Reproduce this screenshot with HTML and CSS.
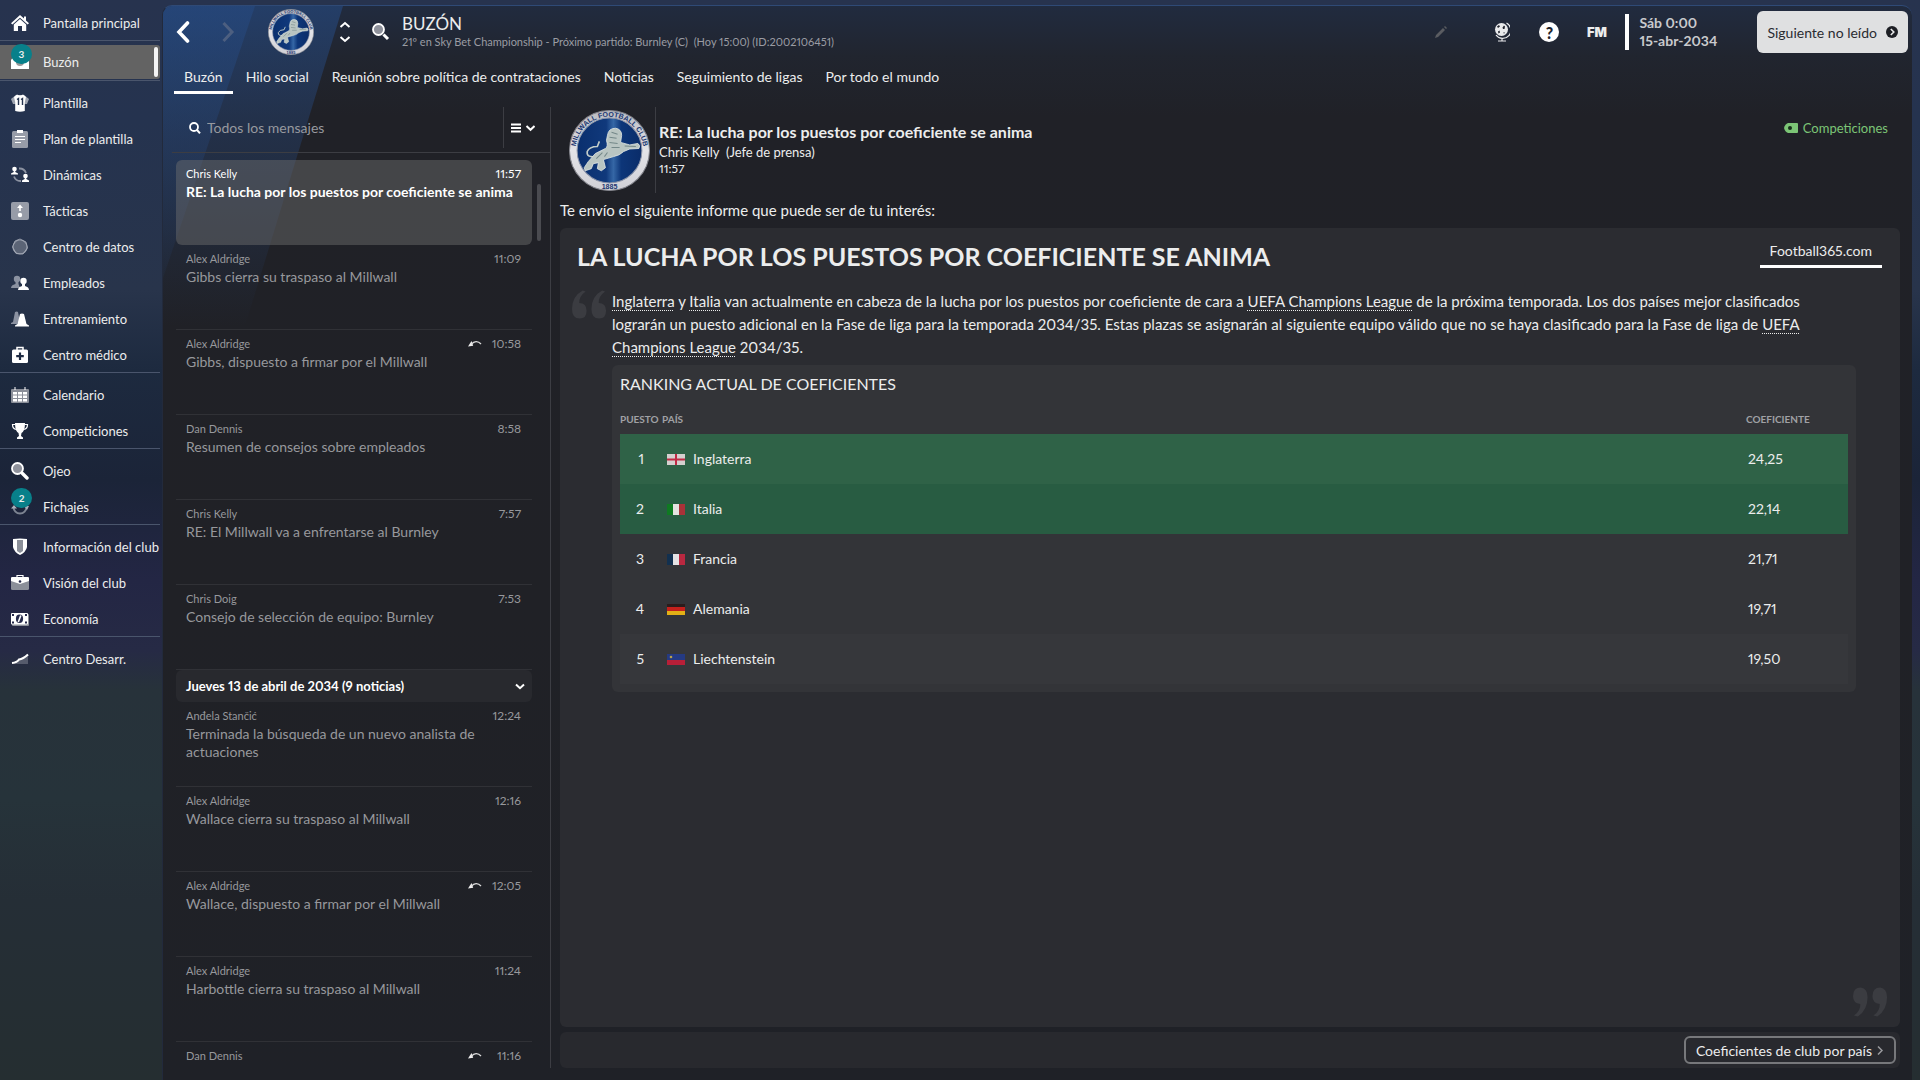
FILE: index.html
```html
<!DOCTYPE html>
<html lang="es">
<head>
	<meta charset="utf-8">
	<title>Buzón</title>
	<link rel="stylesheet" href="styles.css">
</head>
<body>
	<svg class="defs" aria-hidden="true">
		<defs>
			<linearGradient id="ring" x1="0" y1="0" x2="0" y2="1">
				<stop offset="0" stop-color="#b9bac0"/>
				<stop offset=".5" stop-color="#e4e4e8"/>
				<stop offset="1" stop-color="#d0d0d6"/>
			</linearGradient>
			<linearGradient id="blue" x1="0" y1="0" x2="1" y2="0">
				<stop offset="0" stop-color="#0a2f6e"/>
				<stop offset=".45" stop-color="#10397c"/>
				<stop offset=".56" stop-color="#3567a6"/>
				<stop offset=".68" stop-color="#0d3679"/>
				<stop offset="1" stop-color="#0a2c69"/>
			</linearGradient>
			<path id="arc" d="M7.2 47 A 33.5 33.5 0 1 1 72.8 47"/>
			<symbol id="crest" viewBox="0 0 80 80">
				<circle cx="40" cy="40" r="39.5" fill="url(#ring)" stroke="#85868e" stroke-width="1"/>
				<circle cx="40" cy="40" r="32" fill="url(#blue)" stroke="#8a93a8" stroke-width="1"/>
				<text class="crest-text"><textPath href="#arc" startOffset="50%" text-anchor="middle">MILLWALL FOOTBALL CLUB</textPath></text>
				<text class="crest-text" x="40" y="78" text-anchor="middle">1885</text>
				<path d="M26 46 Q17 47 18 41 Q20 36 28 36 L30 31" fill="none" stroke="#c3cdc9" stroke-width="1.6"/>
				<path d="M38 25 Q39 18 46 18 Q52 19 52 25 L51 32 L60 34.5 L68 33 Q71 35 69 38 L60 38.500 L54 41 Q50 45 44 46 L34 49 L36 57 L32 60 L28 58 L29 52 L24 53 L22 58 L16 60 L15 57 L19 51 L26 43 L36 38 Q39 36 37 30z" fill="#b9c5c2" stroke="#e3e8e4" stroke-width=".8"/>
				<path d="M42 22 L48 24 M40 27 L47 28 M40 32 L48 33 M42 37 L50 37 M33 42 L27 48 M38 42 L35 46 M55 35.500 L66 36" stroke="#748889" stroke-width="1" fill="none"/>
			</symbol>
			<symbol id="reply" viewBox="0 0 14 8">
				<path d="M0 6.5 L3.5 1 L5.2 5.8 Z" fill="#eee"/>
				<path d="M3.5 4.2 C6 1 10 .6 13 4" fill="none" stroke="#ddd" stroke-width="1.3"/>
			</symbol>
		</defs>
	</svg>

	<nav class="sidebar">
		<ul>
			<li class="last"><a href="#"><svg viewBox="0 0 18 18"><path d="M9 1 L0 9.2 L1.4 10.4 L9 3.8 L16.6 10.4 L18 9.2 L15 6.5 V2.5 H13 V4.6z" fill="#fff"/><path d="M9 5 L2.8 10.4 V17 H7 V12 H11 V17 H15.2 V10.4z" fill="#fff"/></svg>Pantalla principal</a></li>
			<li class="last"><a class="current" href="#"><svg viewBox="0 0 18 18"><path d="M0 7 L3 3 H15 L18 7 V16 H0z" fill="#fff"/><circle cx="9" cy="9" r="4" fill="#999"/></svg>Buzón<span class="badge">3</span></a></li>
			<li><a href="#"><svg viewBox="0 0 18 18"><path d="M5 1 L0 5 L2 10 L16 10 L18 5 L13 1z" fill="#9fa5b1"/><path d="M6 .5 Q9 2.5 12 .5 L15 3 L13.8 8 V17 Q9 18.5 4.2 17 V8 L3 3z" fill="#fff"/><path d="M6 5.500 L7.500 4.500 V11 M10 5.500 L11.500 4.500 V11" fill="none" stroke="#26344f" stroke-width="1.4"/></svg>Plantilla</a></li>
			<li><a href="#"><svg viewBox="0 0 18 18"><rect x="1" y="1" width="16" height="17" rx="1.5" fill="#979ca8"/><rect x="6" y="0" width="6" height="3" fill="#fff"/><path d="M4 6.5 H14 M4 9.5 H14 M4 12.5 H10" stroke="#fff" stroke-width="1.2"/></svg>Plan de plantilla</a></li>
			<li><a href="#"><svg viewBox="0 0 18 18"><path d="M8 2.5 A7 7 0 0 1 15 7 M10 15 A7 7 0 0 1 3 10.5" fill="none" stroke="#8b92a1" stroke-width="1.8"/><circle cx="3.5" cy="3" r="2.3" fill="#fff"/><path d="M2.7 4 H4.300 V6 L7 7.5 V8.5 H0 V7.5 L2.7 6z" fill="#fff"/><circle cx="14.5" cy="10" r="2.3" fill="#fff"/><path d="M13.7 11 H15.3 V13 L18 14.5 V16 H11 V14.5 L13.7 13z" fill="#fff"/></svg>Dinámicas</a></li>
			<li><a href="#"><svg viewBox="0 0 18 18"><rect x="0" y="0" width="18" height="18" rx="2" fill="#979ca8"/><path d="M9 9 V4" stroke="#fff" stroke-width="1.6"/><path d="M6 6 L9 2.5 L12 6z" fill="#fff"/><circle cx="9" cy="13" r="2.2" fill="#fff"/></svg>Tácticas</a></li>
			<li><a href="#"><svg viewBox="0 0 18 18"><circle cx="9" cy="9" r="7" fill="#5b6476" stroke="#8c93a2" stroke-width="1.2"/><path d="M9 1 L15 4 L16.5 10 L12 16 L5 15.5 L1.5 9 L4 3z" fill="none" stroke="#a9afba" stroke-width=".8"/></svg>Centro de datos</a></li>
			<li><a href="#"><svg viewBox="0 0 18 18"><circle cx="6" cy="5" r="3.2" fill="#8b92a1"/><path d="M0 14 Q0 11 4.5 10 V7 H7.5 V10 L9 14z" fill="#8b92a1"/><circle cx="12.5" cy="7" r="3.2" fill="#fff"/><path d="M7 16 Q7 13 11 12 V9 H14 V12 Q18 13 18 16z" fill="#fff"/></svg>Empleados</a></li>
			<li><a href="#"><svg viewBox="0 0 18 18"><path d="M4 2 Q6 1 7 2 L9 12 L6 14 H0 V13 L2 12z" fill="#8b92a1"/><path d="M9 4 Q11 3 13 4 L15.5 14 L18 15.5 V16.5 H4 V15.5 L6.5 14z" fill="#fff"/></svg>Entrenamiento</a></li>
			<li class="last"><a href="#"><svg viewBox="0 0 18 18"><path d="M6 4 V1.5 H12 V4" fill="none" stroke="#fff" stroke-width="1.5"/><rect x="1" y="3.5" width="16" height="13.5" rx="1.5" fill="#fff"/><path d="M9 6.5 V14 M5.2 10.2 H12.8" stroke="#1e2b43" stroke-width="2.2"/></svg>Centro médico</a></li>
			<li><a href="#"><svg viewBox="0 0 18 18"><rect x="0" y="3" width="18" height="14" rx="1" fill="#8b8f99"/><path d="M4 1 V4 M14 1 V4" stroke="#fff" stroke-width="1"/><path d="M2 6h4v2.600h-4z M7 6h4v2.600h-4z M12 6h4v2.600h-4z M2 9.500h4v2.600h-4z M7 9.500h4v2.600h-4z M12 9.500h4v2.600h-4z M7 13h4v2.600h-4z M2 13h4v2.600h-4z M12 13h4v2.600h-4z" fill="#fff"/></svg>Calendario</a></li>
			<li class="last"><a href="#"><svg viewBox="0 0 18 18"><path d="M4 1 H14 Q14 9 10.5 11 L10 14 L12 15.5 V17 H6 V15.5 L8 14 L7.5 11 Q4 9 4 1z" fill="#fff"/><path d="M4.5 2.5 H1.5 Q1.5 7 5.5 7.5 M13.5 2.5 H16.5 Q16.5 7 12.5 7.5" fill="none" stroke="#fff" stroke-width="1.2"/></svg>Competiciones</a></li>
			<li><a href="#"><svg viewBox="0 0 18 18"><circle cx="6.5" cy="6.5" r="5.5" fill="#8f929c" stroke="#fff" stroke-width="1.8"/><path d="M11.5 11.5 L16 16" stroke="#fff" stroke-width="3.4" stroke-linecap="round"/></svg>Ojeo</a></li>
			<li class="last"><a href="#"><svg viewBox="0 0 18 18"><path d="M2.5 9 A6.5 6.5 0 0 0 15.5 9" fill="none" stroke="#7d8492" stroke-width="2"/><path d="M0 10.5 L3 7 L6 10.5z M13 8 h5 l-2 4z" fill="#a9afba"/></svg>Fichajes<span class="badge">2</span></a></li>
			<li><a href="#"><svg viewBox="0 0 18 18"><path d="M2 1 Q9 0 16 1 V9 Q15 14 9 17 Q3 14 2 9z" fill="#fff"/><path d="M6 2 H12 V13 L9 15 L6 13z" fill="#8b8f99"/></svg>Información del club</a></li>
			<li><a href="#"><svg viewBox="0 0 18 18"><rect x="0" y="3" width="18" height="13" rx="1.5" fill="#8b8f99"/><path d="M6 3.5 V1.5 H12 V3.5" fill="none" stroke="#fff" stroke-width="1.2"/><path d="M0 4 Q0 3 1.5 3 H16.5 Q18 3 18 4 V7 L9 10 L0 7z" fill="#fff"/><circle cx="9" cy="7.5" r="1.3" fill="#24284a"/></svg>Visión del club</a></li>
			<li class="last"><a href="#"><svg viewBox="0 0 18 18"><rect x="1" y="4" width="17" height="12" rx="1" fill="#8b8f99"/><rect x="0" y="3" width="17" height="11.5" rx="1" fill="#fff"/><ellipse cx="8.5" cy="8.7" rx="3.6" ry="4.2" fill="#24284a"/><path d="M9.8 5.5 L7.3 12" stroke="#fff" stroke-width="1.6"/><path d="M1 4h2v2h-2z M14 4h2v2h-2z M1 11.5h2v2h-2z M14 11.5h2v2h-2z" fill="#24284a"/></svg>Economía</a></li>
			<li><a href="#"><svg viewBox="0 0 18 18"><path d="M1 13 L6 11 L10 9 L17 4 V14 H1z" fill="#565b6c"/><path d="M1 13 Q6 12.5 8 9.500 Q12 9 17 4.500" fill="none" stroke="#fff" stroke-width="2.200"/></svg>Centro Desarr.</a></li>
		</ul>
	</nav>

	<main class="panel">
		<header class="topbar">
			<button class="icon-btn" aria-label="Atrás"><svg width="14" height="22" viewBox="0 0 14 22"><path d="M11.5 2 L3 11 L11.5 20" fill="none" stroke="#fff" stroke-width="3.6" stroke-linecap="round"/></svg></button>
			<button class="icon-btn forward" aria-label="Adelante"><svg width="14" height="22" viewBox="0 0 14 22"><path d="M2.5 2 L11 11 L2.5 20" fill="none" stroke="#4d5f80" stroke-width="3"/></svg></button>
			<svg class="crest-small"><use href="#crest"/></svg>
			<button class="icon-btn" aria-label="Cambiar de club"><svg width="12" height="22" viewBox="0 0 12 22"><path d="M1.5 6 L6 2 L10.5 6 M1.5 16 L6 20 L10.5 16" fill="none" stroke="#fff" stroke-width="2"/></svg></button>
			<button class="icon-btn find" aria-label="Buscar"><svg width="18" height="18" viewBox="0 0 18 18"><circle cx="6.5" cy="6.5" r="5.5" fill="#8f929c" stroke="#fff" stroke-width="1.8"/><path d="M11.5 11.5 L16 16" stroke="#fff" stroke-width="3"/></svg></button>
			<div class="heading">
				<h1>BUZÓN</h1>
				<p>21º en Sky Bet Championship - Próximo partido: Burnley (C)&nbsp; (Hoy 15:00) (ID:2002106451)</p>
			</div>
			<div class="tools">
				<button class="icon-btn" aria-label="Editar"><svg width="12" height="12" viewBox="0 0 12 12"><path d="M0 12 L1 9 L8 2 L10 4 L3 11z M9 1 L10 0 L12 2 L11 3z" fill="#5a5c61"/></svg></button>
				<button class="icon-btn" aria-label="Mundo"><svg width="16" height="20" viewBox="0 0 16 20"><circle cx="7.5" cy="7.500" r="6.500" fill="#e9eaec"/><path d="M3 4.500 l2-1.500 1 1.500-2 1.500z M8.500 5.500 l1.500-2 1 1-.5 2.500-1.500 0z M4 9.500 l1.500-1 .5 2-1.500 1z M9 11 l1.500-1 0 1.500z" fill="#20232c"/><path d="M12.500 1 A8.200 8.200 0 1 1 2 13 M8 16 V19 M4 19 H12" fill="none" stroke="#e9eaec" stroke-width="1.200"/></svg></button>
				<button class="icon-btn help" aria-label="Ayuda">?</button>
				<button class="icon-btn fm">FM</button>
				<div class="date"><span>Sáb 0:00</span><span>15-abr-2034</span></div>
				<button class="next">Siguiente no leído <svg width="12" height="12" viewBox="0 0 12 12"><circle cx="6" cy="6" r="6" fill="#1d1f24"/><path d="M4.8 3 L7.8 6 L4.8 9" fill="none" stroke="#e6e7e8" stroke-width="1.6"/></svg></button>
			</div>
		</header>

		<nav class="tabs">
			<a class="active" href="#">Buzón</a>
			<a href="#">Hilo social</a>
			<a href="#">Reunión sobre política de contrataciones</a>
			<a href="#">Noticias</a>
			<a href="#">Seguimiento de ligas</a>
			<a href="#">Por todo el mundo</a>
		</nav>

		<div class="columns">
			<section class="inbox">
				<div class="search">
					<label for="q" aria-label="Buscar mensajes"><svg width="12" height="12" viewBox="0 0 12 12"><circle cx="5" cy="5" r="4" fill="none" stroke="#fff" stroke-width="1.8"/><path d="M8 8 L11 11.3" stroke="#fff" stroke-width="2"/></svg></label>
					<input id="q" type="text" placeholder="Todos los mensajes">
					<button class="menu-btn" aria-label="Filtrar"><svg width="24" height="10" viewBox="0 0 24 10"><path d="M0 1.5 H10 M0 5 H10 M0 8.5 H10" stroke="#fff" stroke-width="1.8"/><path d="M15.5 3 L19.5 6.8 L23.5 3" fill="none" stroke="#fff" stroke-width="2"/></svg></button>
				</div>
				<div class="scroll">
					<ul class="messages">
						<li class="selected"><a href="#"><span class="from">Chris Kelly</span><time>11:57</time><span class="subject">RE: La lucha por los puestos por coeficiente se anima</span></a></li>
						<li><a href="#"><span class="from">Alex Aldridge</span><time>11:09</time><span class="subject">Gibbs cierra su traspaso al Millwall</span></a></li>
						<li><a href="#"><span class="from">Alex Aldridge</span><svg class="reply"><use href="#reply"/></svg><time>10:58</time><span class="subject">Gibbs, dispuesto a firmar por el Millwall</span></a></li>
						<li><a href="#"><span class="from">Dan Dennis</span><time>8:58</time><span class="subject">Resumen de consejos sobre empleados</span></a></li>
						<li><a href="#"><span class="from">Chris Kelly</span><time>7:57</time><span class="subject">RE: El Millwall va a enfrentarse al Burnley</span></a></li>
						<li><a href="#"><span class="from">Chris Doig</span><time>7:53</time><span class="subject">Consejo de selección de equipo: Burnley</span></a></li>
						<li class="day"><button>Jueves 13 de abril de 2034 (9 noticias)<svg width="10" height="7" viewBox="0 0 10 7"><path d="M1 1.5 L5 5.2 L9 1.5" fill="none" stroke="#fff" stroke-width="2"/></svg></button></li>
						<li><a href="#"><span class="from">Anđela Stančić</span><time>12:24</time><span class="subject">Terminada la búsqueda de un nuevo analista de actuaciones</span></a></li>
						<li><a href="#"><span class="from">Alex Aldridge</span><time>12:16</time><span class="subject">Wallace cierra su traspaso al Millwall</span></a></li>
						<li><a href="#"><span class="from">Alex Aldridge</span><svg class="reply"><use href="#reply"/></svg><time>12:05</time><span class="subject">Wallace, dispuesto a firmar por el Millwall</span></a></li>
						<li><a href="#"><span class="from">Alex Aldridge</span><time>11:24</time><span class="subject">Harbottle cierra su traspaso al Millwall</span></a></li>
						<li><a href="#"><span class="from">Dan Dennis</span><svg class="reply"><use href="#reply"/></svg><time>11:16</time></a></li>
					</ul>
					<div class="scrollbar"></div>
				</div>
			</section>

			<article class="mail">
				<header class="mail-head">
					<svg class="crest-big"><use href="#crest"/></svg>
					<div class="mail-title">
						<h2>RE: La lucha por los puestos por coeficiente se anima</h2>
						<p>Chris Kelly&nbsp; (Jefe de prensa)</p>
						<p class="hour">11:57</p>
					</div>
					<a class="tag" href="#"><svg width="14" height="10" viewBox="0 0 14 10"><path d="M4 0 H13 Q14 0 14 1 V9 Q14 10 13 10 H4 Q1 9 0 5 Q1 1 4 0z" fill="#7cc576"/><circle cx="6" cy="5" r="2" fill="#17301a"/></svg>Competiciones</a>
				</header>
				<p class="intro">Te envío el siguiente informe que puede ser de tu interés:</p>

				<div class="card">
					<div class="card-head">
						<h2>LA LUCHA POR LOS PUESTOS POR COEFICIENTE SE ANIMA</h2>
						<a class="source" href="#">Football365.com</a>
					</div>
					<div class="story">
						<svg class="quote" viewBox="0 0 36 30"><path d="M14 1 Q7 6 7.5 13 Q15 13 15 21 Q15 29 8 29 Q0 29 0 19 Q0 6 11 0z M34 1 Q27 6 27.5 13 Q35 13 35 21 Q35 29 28 29 Q20 29 20 19 Q20 6 31 0z" fill="#3b3c41"/></svg>
						<div class="story-body">
							<p><a href="#">Inglaterra</a> y <a href="#">Italia</a> van actualmente en cabeza de la lucha por los puestos por coeficiente de cara a <a href="#">UEFA Champions League</a> de la próxima temporada. Los dos países mejor clasificados lograrán un puesto adicional en la Fase de liga para la temporada 2034/35. Estas plazas se asignarán al siguiente equipo válido que no se haya clasificado para la Fase de liga de <a href="#">UEFA Champions League</a> 2034/35.</p>
							<div class="ranking">
								<h3>RANKING ACTUAL DE COEFICIENTES</h3>
								<table>
									<thead>
										<tr><th class="pos">PUESTO</th><th>PAÍS</th><th class="coef">COEFICIENTE</th></tr>
									</thead>
									<tbody>
										<tr class="top"><td class="pos">1</td><td><svg class="flag" viewBox="0 0 18 11"><rect width="18" height="11" fill="#d5d0cf"/><path d="M9 0 V11 M0 5.5 H18" stroke="#c02a45" stroke-width="2"/></svg>Inglaterra</td><td>24,25</td></tr>
										<tr class="top"><td class="pos">2</td><td><svg class="flag" viewBox="0 0 18 11"><rect width="6" height="11" fill="#0f7a22"/><rect x="6" width="6" height="11" fill="#e4e2e0"/><rect x="12" width="6" height="11" fill="#a83238"/></svg>Italia</td><td>22,14</td></tr>
										<tr><td class="pos">3</td><td><svg class="flag" viewBox="0 0 18 11"><rect width="6" height="11" fill="#12304f"/><rect x="6" width="6" height="11" fill="#e4e2e4"/><rect x="12" width="6" height="11" fill="#b92840"/></svg>Francia</td><td>21,71</td></tr>
										<tr><td class="pos">4</td><td><svg class="flag" viewBox="0 0 18 11"><rect width="18" height="4" fill="#2b1c1c"/><rect y="3" width="18" height="4" fill="#c4201c"/><rect y="7" width="18" height="4" fill="#e2b016"/></svg>Alemania</td><td>19,71</td></tr>
										<tr class="light"><td class="pos">5</td><td><svg class="flag" viewBox="0 0 18 11"><rect width="18" height="6" fill="#253a82"/><rect y="6" width="18" height="5" fill="#b81f38"/><circle cx="4" cy="3" r="1.3" fill="#b9a04a"/></svg>Liechtenstein</td><td>19,50</td></tr>
									</tbody>
								</table>
							</div>
						</div>
					</div>
					<svg class="quote close" viewBox="0 0 36 30"><path d="M1 29 Q8 24 7.5 17 Q0 16 0 9 Q0 0 8 0 Q15 1 15 10 Q15 23 5 30z M21 29 Q28 24 27.5 17 Q20 16 20 9 Q20 0 28 0 Q35 1 35 10 Q35 23 25 30z" fill="#3b3c41"/></svg>
				</div>

				<footer class="actions">
					<button>Coeficientes de club por país<svg width="6" height="9" viewBox="0 0 6 9"><path d="M1 .5 L5 4.5 L1 8.5" fill="none" stroke="#9b9c9f" stroke-width="1.5"/></svg></button>
				</footer>
			</article>
		</div>
	</main>
</body>
</html>
```
FILE: styles.css
```css
* {
	box-sizing: border-box;
}
body {
	margin: 0;
	height: 100vh;
	padding: 5px 8px 0 0;
	display: grid;
	grid-template-columns: 160px 1fr;
	column-gap: 2px;
	overflow: hidden;
	font-family: Lato, "Open Sans", sans-serif;
	font-size: 14px;
	font-variant-numeric: proportional-nums;
	color: #eceded;
	background: linear-gradient(#27334e 0, #25334f 120px, #28344b 290px, #1d2a3f 370px, #1b2438 480px, #232644 580px, #262a45 650px, #27323a 690px, #26333a 800px, #252e36 900px, #252e31 1080px);
}
h1, h2, h3, p, ul {
	margin: 0;
	padding: 0;
}
ul {
	list-style: none;
}
a {
	color: inherit;
	text-decoration: none;
}
button {
	border: 0;
	padding: 0;
	background: none;
	color: inherit;
	font: inherit;
	cursor: pointer;
}
svg {
	display: block;
	flex: none;
}
.defs {
	position: absolute;
	width: 0;
	height: 0;
}
.crest-text {
	font: bold 7px "Liberation Sans", sans-serif;
	fill: #1c3872;
}

/* sidebar */
.sidebar li {
	height: 36px;
}
.sidebar .last {
	border-bottom: 1px solid #4a556c;
	margin-bottom: 4px;
}
.sidebar a {
	position: relative;
	display: flex;
	align-items: center;
	gap: 14px;
	height: 36px;
	padding-left: 11px;
	font-size: 13px;
	white-space: nowrap;
}
.sidebar svg {
	width: 18px;
	height: 18px;
}
.sidebar a.current {
	height: 34px;
	background: #636363;
	border-radius: 0 3px 3px 0;
}
.sidebar a.current::after {
	content: "";
	width: 4px;
	height: 30px;
	margin: 0 2px 0 auto;
	border-radius: 2px;
	background: #f4f4f4;
}
.badge {
	position: absolute;
	left: 11px;
	top: -1px;
	width: 21px;
	height: 20px;
	border-radius: 10px;
	background: #08808a;
	font-size: 10px;
	font-weight: bold;
	line-height: 20px;
	text-align: center;
}

/* main panel */
.panel {
	position: relative;
	isolation: isolate;
	min-width: 0;
	min-height: 0;
	display: flex;
	flex-direction: column;
	border-top: 1px solid #2f4a76;
	border-left: 1px solid #222a3c;
	border-radius: 10px 10px 0 0;
	overflow: hidden;
	background: linear-gradient(#212b3f 0, #21252f 50px, #202127 110px, #202126 600px, #1f2127 100%);
}
/* diagonal club stripes in the corner */
.panel::before,
.panel::after {
	content: "";
	position: absolute;
	z-index: -1;
	inset: 0 auto auto 0;
	width: 180px;
	height: 400px;
	clip-path: polygon(0 0, 100% 0, 32% 100%, 0 100%);
	background: linear-gradient(rgba(38, 74, 130, .6), rgba(38, 66, 112, .45) 130px, rgba(38, 66, 112, 0) 320px);
}
.panel::after {
	width: 92px;
	clip-path: polygon(0 0, 100% 0, 0 68%);
}
.topbar {
	display: flex;
	align-items: center;
	height: 52px;
	padding: 0 4px 0 13px;
}
.icon-btn {
	display: flex;
	align-items: center;
	justify-content: center;
}
.forward {
	margin-left: 31px;
}
.crest-small {
	width: 46px;
	height: 46px;
	margin: 0 25px 0 33px;
}
.find {
	margin: 0 12px 0 21px;
}
.heading {
	flex: 1;
}
.heading h1 {
	font-size: 17px;
	font-weight: normal;
	line-height: 20px;
}
.heading p {
	font-size: 11px;
	line-height: 16px;
	color: #9a9ca3;
}
.tools {
	display: flex;
	align-items: center;
}
.tools .icon-btn {
	width: 47px;
}
.tools .icon-btn:first-child {
	width: 74px;
}
.tools .help {
	width: 20px;
	height: 20px;
	margin: 0 14px;
	border-radius: 50%;
	background: #fff;
	color: #20232c;
	font-size: 16px;
	font-weight: 900;
}
.tools .fm {
	font-family: Inter, sans-serif;
	font-size: 13px;
	font-weight: 900;
}
.date {
	display: flex;
	flex-direction: column;
	width: 132px;
	margin-left: 5px;
	padding-left: 10px;
	border-left: 4px solid #fff;
	font-weight: bold;
	line-height: 18px;
	color: #c9cacd;
}
.next {
	display: flex;
	align-items: center;
	gap: 9px;
	height: 42px;
	padding: 0 10px;
	border-radius: 6px;
	background: #dfe0e1;
	color: #2a2c31;
	white-space: nowrap;
}
.tabs {
	display: flex;
	gap: 3px;
	padding-left: 11px;
}
.tabs a {
	padding: 0 10px;
	line-height: 38px;
	height: 36px;
}
.tabs .active {
	border-bottom: 3px solid #fff;
}
.columns {
	flex: 1;
	min-height: 0;
	display: grid;
	grid-template-columns: 388px 1fr;
	padding: 13px 12px 12px 0;
}

/* message list */
.inbox {
	display: flex;
	flex-direction: column;
	min-height: 0;
	padding-left: 9px;
	border-right: 1px solid #3c3d43;
}
.search {
	display: flex;
	align-items: center;
	height: 46px;
	padding: 0 0 4px 17px;
	border-bottom: 1px solid #3c3d43;
}
.search input {
	flex: 1;
	min-width: 0;
	padding: 0 6px;
	border: 0;
	outline: 0;
	background: none;
	color: #eee;
	font: inherit;
}
.search input::placeholder {
	color: #97999f;
	opacity: 1;
}
.menu-btn {
	align-self: stretch;
	padding: 0 15px 0 7px;
	border-left: 1px solid #3c3d43;
}
.scroll {
	flex: 1;
	min-height: 0;
	display: flex;
	gap: 5px;
	padding: 7px 0 0 4px;
	overflow: hidden;
}
.messages {
	flex: none;
	width: 356px;
	color: #97989c;
}
.messages li {
	height: 85px;
	border-bottom: 1px solid #303136;
}
.messages a {
	display: grid;
	grid-template-columns: 1fr auto 39px;
	align-items: center;
	padding: 4px 11px 0 10px;
}
.from {
	font-size: 11px;
	line-height: 19px;
}
.messages time {
	grid-column: 3;
	font-size: 12px;
	line-height: 16px;
	text-align: right;
}
.reply {
	width: 14px;
	height: 8px;
}
.subject {
	grid-column: 1 / -1;
	font-size: 14px;
	line-height: 18px;
	padding-right: 30px;
}
.messages .selected {
	border: 0;
	border-radius: 6px;
	background: rgba(112, 112, 114, .45);
	color: #fff;
}
.selected .subject {
	font-weight: bold;
	padding-right: 0;
	white-space: nowrap;
}
.messages .day {
	height: 32px;
	border: 0;
	border-radius: 6px;
	background: #28292e;
}
.day button {
	display: flex;
	align-items: center;
	justify-content: space-between;
	width: 100%;
	height: 32px;
	padding: 0 7px 0 10px;
	font-size: 13px;
	font-weight: bold;
	color: #fff;
}
.scrollbar {
	width: 4px;
	height: 57px;
	margin-top: 24px;
	border-radius: 2px;
	background: #4a4b50;
}

/* opened mail */
.mail {
	display: flex;
	flex-direction: column;
	min-width: 0;
	padding-left: 9px;
}
.mail-head {
	display: flex;
	height: 86px;
}
.crest-big {
	width: 81px;
	height: 81px;
	margin: 3px 5px 0 9px;
}
.mail-title {
	flex: 1;
	padding: 14px 0 0 3px;
	border-left: 1px solid #3c3d43;
}
.mail-title h2 {
	font-size: 16px;
	line-height: 22px;
}
.mail-title p {
	font-size: 13px;
	line-height: 18px;
}
.mail-title .hour {
	font-size: 12px;
	line-height: 16px;
}
.tag {
	display: flex;
	align-items: center;
	gap: 5px;
	height: 42px;
	padding-right: 12px;
	font-size: 13px;
	color: #7cc576;
}
.intro {
	font-size: 15px;
	line-height: 35px;
}
.card {
	flex: 1;
	display: flex;
	flex-direction: column;
	border-radius: 6px;
	background: #2b2c31;
}
.card-head {
	display: flex;
	justify-content: space-between;
	padding: 9px 18px 0 17px;
}
.card-head h2 {
	font-size: 25px;
	line-height: 38px;
}
.source {
	height: 31px;
	padding: 0 10px;
	border-bottom: 3px solid #fff;
	line-height: 28px;
}
.story {
	display: flex;
	gap: 5px;
	padding: 15px 44px 0 12px;
}
.quote {
	width: 35px;
	height: 30px;
}
.story-body {
	flex: 1;
}
.story-body p {
	font-size: 15px;
	line-height: 23px;
}
.story-body p a {
	text-decoration: underline dotted 1px;
	text-underline-offset: 3px;
}
.ranking {
	margin-top: 6px;
	padding: 8px;
	border-radius: 6px;
	background: #333438;
}
.ranking h3 {
	font-size: 16px;
	font-weight: normal;
	line-height: 22px;
}
.ranking table {
	width: 100%;
	border-collapse: collapse;
}
.ranking th {
	height: 39px;
	padding: 8px 0 0;
	font-size: 10px;
	text-align: left;
	color: #a0a1a5;
}
.ranking td {
	height: 50px;
	padding: 0 2px 2px;
}
.ranking td.pos {
	padding: 0 18px 2px 0;
	text-align: right;
}
.pos {
	width: 42px;
}
.coef {
	width: 102px;
}
.ranking .top {
	background: #2f6247;
}
.ranking .top + .top {
	background: #285c42;
}
.ranking .light {
	background: #36373b;
}
.flag {
	display: inline-block;
	width: 18px;
	height: 11px;
	margin: 0 8px 0 3px;
	vertical-align: -1px;
}
.close {
	margin: auto 12px 10px auto;
}
.actions {
	display: flex;
	justify-content: flex-end;
	margin-top: 5px;
	padding: 4px;
	border-radius: 6px;
	background: #28292e;
}
.actions button {
	display: flex;
	align-items: center;
	gap: 5px;
	height: 28px;
	padding: 0 11px 0 10px;
	border: 2px solid #77787b;
	border-radius: 6px;
}
```
